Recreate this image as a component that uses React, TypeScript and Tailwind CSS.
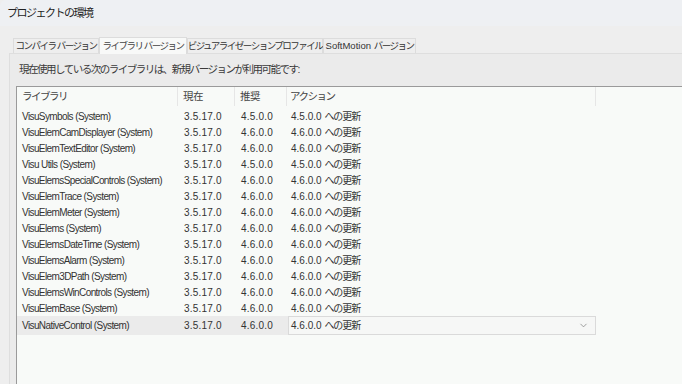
import { ChevronDown } from "lucide-react";

const rows = [
  ["VisuSymbols (System)", "3.5.17.0", "4.5.0.0"],
  ["VisuElemCamDisplayer (System)", "3.5.17.0", "4.6.0.0"],
  ["VisuElemTextEditor (System)", "3.5.17.0", "4.6.0.0"],
  ["Visu Utils (System)", "3.5.17.0", "4.5.0.0"],
  ["VisuElemsSpecialControls (System)", "3.5.17.0", "4.6.0.0"],
  ["VisuElemTrace (System)", "3.5.17.0", "4.6.0.0"],
  ["VisuElemMeter (System)", "3.5.17.0", "4.6.0.0"],
  ["VisuElems (System)", "3.5.17.0", "4.6.0.0"],
  ["VisuElemsDateTime (System)", "3.5.17.0", "4.6.0.0"],
  ["VisuElemsAlarm (System)", "3.5.17.0", "4.6.0.0"],
  ["VisuElem3DPath (System)", "3.5.17.0", "4.6.0.0"],
  ["VisuElemsWinControls (System)", "3.5.17.0", "4.6.0.0"],
  ["VisuElemBase (System)", "3.5.17.0", "4.6.0.0"],
  ["VisuNativeControl (System)", "3.5.17.0", "4.6.0.0"],
];

const tabs = [
  { en: "", label: "コンパイラ バージョン", w: "w-[86px]" },
  { en: "", label: "ライブラリ バージョン", w: "w-[88px]", active: true },
  { en: "", label: "ビジュアライゼーションプロファイル", w: "w-[136px]" },
  { en: "SoftMotion ", label: "バージョン", w: "w-[93px]" },
];

function Update({ v }: { v: string }) {
  return (
    <span className="whitespace-nowrap">
      {v} <span className="text-[10px] tracking-[-1px]">への更新</span>
    </span>
  );
}

export default function App() {
  return (
    <div className="w-[682px] h-[384px] overflow-hidden bg-[#eeeeee] text-[#333] text-[10px] font-['Liberation_Sans','Noto_Sans_CJK_JP',sans-serif]">
      {/* title bar */}
      <div className="h-[26px] bg-[#eef0f3] flex items-center pl-[7px] text-[11px] text-[#222] rounded-tl-[6px]">
        <span className="tracking-[-1.5px]">プロジェクトの環境</span>
      </div>

      <div className="pt-[10px] pl-[9px]">
        {/* tabs */}
        <div className="flex items-end pl-[4px] h-[17px]">
          {tabs.map((t) => (
            <div
              key={t.label + t.en}
              className={
                t.active
                  ? `${t.w} h-[17px] bg-[#f8f9f8] border border-b-0 border-[#dcdcdc] flex items-center justify-center text-[#444] relative top-[1px] whitespace-nowrap`
                  : `${t.w} h-[15px] border border-b-0 border-[#dcdcdc] flex items-center justify-center text-[#333] whitespace-nowrap`
              }
            >
              <span className="leading-none text-[9.5px]">
                {t.en}
                <span className="tracking-[-1.5px]">{t.label}</span>
              </span>
            </div>
          ))}
        </div>

        {/* panel */}
        <div className="bg-[#ebebeb] border-l border-t border-[#dedede] h-[340px] pl-[6px]">
          <div className="h-[32px] flex items-center pl-[3px] text-[10.5px] text-[#3a3a3a] whitespace-nowrap">
            <span className="tracking-[-1.5px]">現在使用している次のライブラリは、新規バージョンが利用可能です:</span>
          </div>

          <div className="bg-[#f8faf8] border-l border-t border-[#9a9a9a] h-[320px]">
            {/* header */}
            <div className="flex h-[19px] items-center text-[#444] text-[10.5px]">
              <div className="w-[161px] pl-[5px] h-full flex items-center border-r border-[#e6e6e6] tracking-[-1.5px]">ライブラリ</div>
              <div className="w-[57px] pl-[5px] h-full flex items-center border-r border-[#e6e6e6] tracking-[-0.5px]">現在</div>
              <div className="w-[52px] pl-[5px] h-full flex items-center border-r border-[#e6e6e6] tracking-[-0.5px]">推奨</div>
              <div className="w-[309px] pl-[3px] h-full flex items-center border-r border-[#e6e6e6] tracking-[-1.5px]">アクション</div>
            </div>

            <div className="pt-[2px]">
              {rows.map(([name, cur, rec], i) => {
                const last = i === rows.length - 1;
                const sel = last ? "bg-[#ebebeb]" : "";
                return (
                  <div key={name} className={`flex items-center whitespace-nowrap ${last ? "h-[19px]" : "h-[16px]"}`}>
                    <div className={`w-[161px] pl-[5px] h-full flex items-center tracking-[-0.6px] ${sel}`}>{name}</div>
                    <div className={`w-[57px] pl-[6px] h-full flex items-center tracking-[0.2px] ${sel}`}>{cur}</div>
                    <div className={`w-[53px] pl-[6px] h-full flex items-center tracking-[0.2px] ${sel}`}>{rec}</div>
                    {last ? (
                      <div className="w-[308px] h-[19px] border border-[#dadada] bg-[#f6f7f6] flex items-center justify-between pl-[2px] pr-[6px]">
                        <Update v={rec} />
                        <ChevronDown size={11} strokeWidth={1.5} className="text-[#777]" />
                      </div>
                    ) : (
                      <div className="pl-[3px] h-full flex items-center">
                        <Update v={rec} />
                      </div>
                    )}
                  </div>
                );
              })}
            </div>
          </div>
        </div>
      </div>
    </div>
  );
}
